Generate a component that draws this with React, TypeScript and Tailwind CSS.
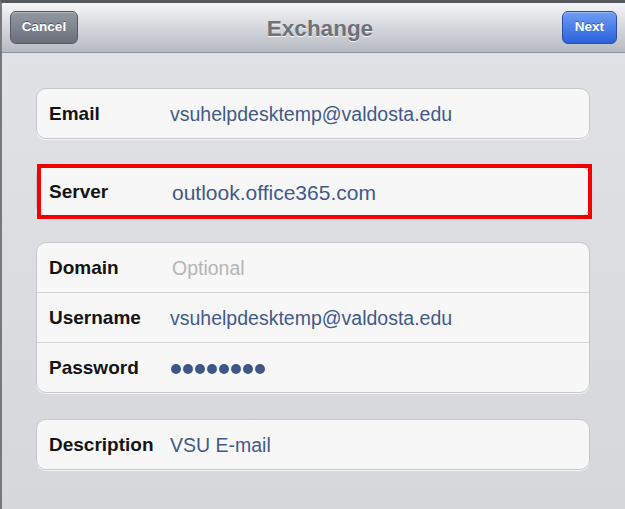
import React from "react";

type Row = {
  label: string;
  value?: string;
  placeholder?: string;
  dots?: number;
};

const font = { fontFamily: '"Liberation Sans", Arial, Helvetica, sans-serif' };

const FieldRow = ({ row, big }: { row: Row; big?: boolean }) => (
  <div className="flex h-[49px] items-center pl-[12px] pt-[2px]">
    <span className="w-[121px] shrink-0 text-[19px] font-bold text-[#141414]">
      {row.label}
    </span>
    {row.dots ? (
      <span className="ml-[1px] mt-[1px] flex gap-[2px]">
        {Array.from({ length: row.dots }).map((_, i) => (
          <span key={i} className="h-[10px] w-[10px] rounded-full bg-[#3f5689]" />
        ))}
      </span>
    ) : row.placeholder ? (
      <span className="ml-[2px] text-[19.5px] text-[#b4b5b8]">{row.placeholder}</span>
    ) : (
      <span
        className={
          big
            ? "ml-[2px] text-[21px] text-[#415a8a]"
            : "text-[19.5px] text-[#415a8a]"
        }
      >
        {row.value}
      </span>
    )}
  </div>
);

const Card = ({ rows, big }: { rows: Row[]; big?: boolean }) => (
  <div className="overflow-hidden rounded-[10px] border border-[#c5c7cb] bg-[#f7f7f7] shadow-[0_1px_0_#f4f5f7]">
    {rows.map((row, i) => (
      <div key={row.label} className={i > 0 ? "border-t border-[#d2d3d6]" : ""}>
        <FieldRow row={row} big={big} />
      </div>
    ))}
  </div>
);

const App = () => {
  return (
    <div
      className="flex h-[509px] w-[625px] flex-col overflow-hidden border-l-[2px] border-t-[3px] border-l-[#75787c] border-t-[#55585d] bg-gradient-to-b from-[#e1e3e7] to-[#d6d7db]"
      style={font}
    >
      {/* Navigation bar */}
      <div className="flex h-[50px] shrink-0 items-center justify-between border-b border-[#8e9299] bg-gradient-to-b from-[#f4f5f7] to-[#b6bac2] pl-[8px] pr-[8px]">
        <button className="h-[33px] w-[68px] rounded-[6px] border border-[#555a61] bg-gradient-to-b from-[#939aa2] to-[#69707a] text-[13.5px] font-bold text-white shadow-[inset_0_1px_0_rgba(255,255,255,0.25)] [text-shadow:0_-1px_0_rgba(0,0,0,0.4)]">
          Cancel
        </button>
        <h1 className="pt-[2px] text-[22.5px] font-bold text-[#6d7278] [text-shadow:0_1px_0_rgba(255,255,255,0.8)]">
          Exchange
        </h1>
        <button className="h-[33px] w-[55px] rounded-[6px] border border-[#2b4f9e] bg-gradient-to-b from-[#6f9ef2] to-[#2a60db] text-[13.5px] font-bold text-white shadow-[inset_0_1px_0_rgba(255,255,255,0.3)] [text-shadow:0_-1px_0_rgba(0,0,0,0.35)]">
          Next
        </button>
      </div>

      {/* Form */}
      <div className="flex flex-col pl-[34px] pr-[35px] pt-[35px]">
        <Card rows={[{ label: "Email", value: "vsuhelpdesktemp@valdosta.edu" }]} />

        <div className="relative mt-[27px]">
          <Card rows={[{ label: "Server", value: "outlook.office365.com" }]} big />
          <div className="pointer-events-none absolute bottom-[-2px] left-[1px] right-[-2px] top-[-2px] border-4 border-[#f50000]" />
        </div>

        <div className="mt-[25px]">
          <Card
            rows={[
              { label: "Domain", placeholder: "Optional" },
              { label: "Username", value: "vsuhelpdesktemp@valdosta.edu" },
              { label: "Password", dots: 8 },
            ]}
          />
        </div>

        <div className="mt-[26px]">
          <Card rows={[{ label: "Description", value: "VSU E-mail" }]} />
        </div>
      </div>
    </div>
  );
};

export default App;
